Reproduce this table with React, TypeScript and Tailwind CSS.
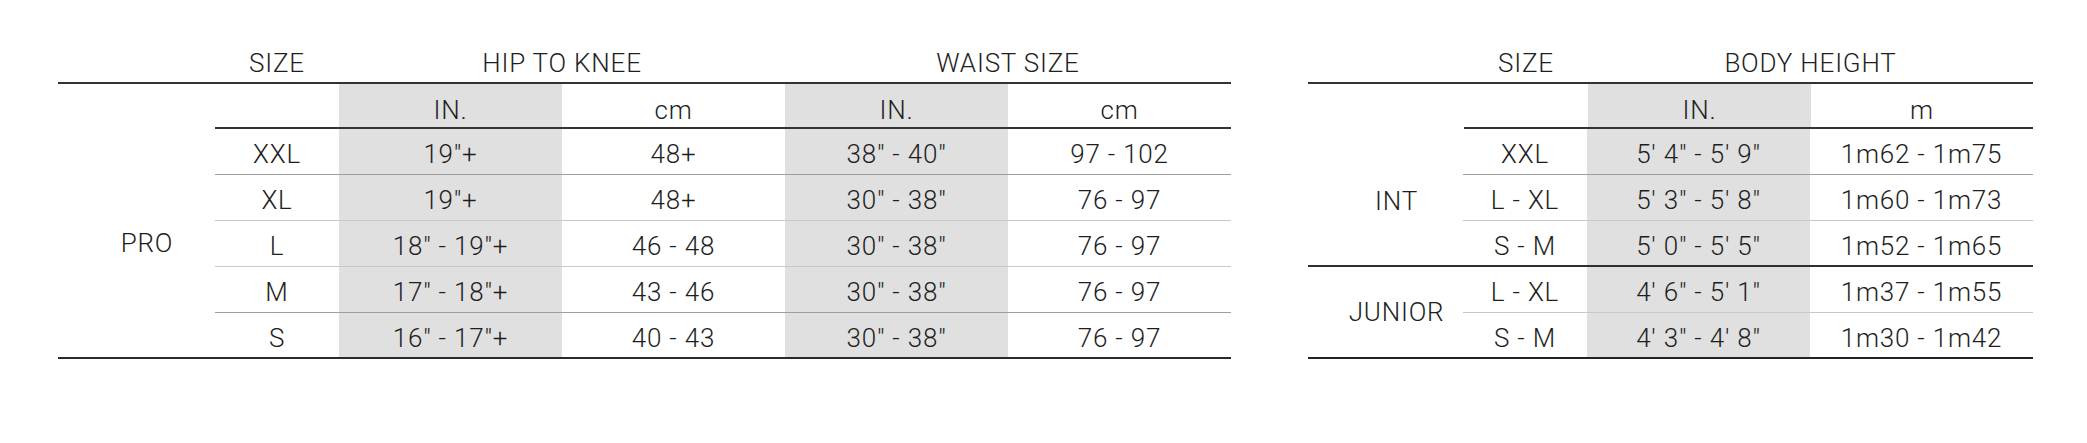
const font = { fontFamily: "Roboto, 'Liberation Sans', sans-serif" }

interface Row {
  size: string
  cells: string[]
  line: string
}

const proRows: Row[] = [
  { size: "XXL", cells: ["19″+", "48+", "38″ - 40″", "97 - 102"], line: "border-[#9e9e9e]" },
  { size: "XL", cells: ["19″+", "48+", "30″ - 38″", "76 - 97"], line: "border-[#c8c8c8]" },
  { size: "L", cells: ["18″ - 19″+", "46 - 48", "30″ - 38″", "76 - 97"], line: "border-[#c8c8c8]" },
  { size: "M", cells: ["17″ - 18″+", "43 - 46", "30″ - 38″", "76 - 97"], line: "border-[#9e9e9e]" },
  { size: "S", cells: ["16″ - 17″+", "40 - 43", "30″ - 38″", "76 - 97"], line: "" },
]

const intRows: Row[] = [
  { size: "XXL", cells: ["5′ 4″ - 5′ 9″", "1m62 - 1m75"], line: "border-[#9e9e9e]" },
  { size: "L - XL", cells: ["5′ 3″ - 5′ 8″", "1m60 - 1m73"], line: "border-[#c8c8c8]" },
  { size: "S - M", cells: ["5′ 0″ - 5′ 5″", "1m52 - 1m65"], line: "" },
]

const juniorRows: Row[] = [
  { size: "L - XL", cells: ["4′ 6″ - 5′ 1″", "1m37 - 1m55"], line: "border-[#c8c8c8]" },
  { size: "S - M", cells: ["4′ 3″ - 4′ 8″", "1m30 - 1m42"], line: "" },
]

function DataRow({ row, last }: { row: Row; last: boolean }) {
  return (
    <div className={`flex ${last ? "h-[44px]" : `h-[46px] border-b ${row.line}`}`}>
      <div className="w-[124px] flex items-center justify-center pt-[5px]">{row.size}</div>
      {row.cells.map((c, i) => (
        <div
          key={i}
          className={`w-[223px] flex items-center justify-center pt-[5px] ${i % 2 === 0 ? "bg-[#e0e0e0]" : ""}`}
        >
          {c}
        </div>
      ))}
    </div>
  )
}

function Group({ label, rows, last, pad }: { label: string; rows: Row[]; last?: boolean; pad: string }) {
  return (
    <div className={`flex ${last ? "border-b-2 border-[#222]" : "border-b-2 border-[#2f2f2f]"}`}>
      <div className={`w-[156px] flex items-center justify-center pl-[22px] ${pad}`}>{label}</div>
      <div className="flex flex-col">
        {rows.map((r, i) => (
          <DataRow key={i} row={r} last={i === rows.length - 1} />
        ))}
      </div>
    </div>
  )
}

export default function App() {
  return (
    <div
      className="w-[2087px] h-[443px] bg-white text-[26px] tracking-[0.8px] font-light text-[#1e1e1e] leading-none"
      style={font}
    >
      <div className="flex pl-[58px] pt-[36px] gap-[77px]">
        {/* left table */}
        <div className="w-[1173px] flex flex-col">
          <div className="flex h-[46px] items-end pb-[6px]">
            <div className="w-[157px]" />
            <div className="w-[124px] text-center">SIZE</div>
            <div className="w-[446px] text-center">HIP TO KNEE</div>
            <div className="w-[446px] text-center">WAIST SIZE</div>
          </div>
          <div className="border-t-2 border-[#333]">
            <div className="flex">
              <div className="w-[157px]" />
              <div className="flex h-[45px] border-b-2 border-[#333]">
                <div className="w-[124px]" />
                <div className="w-[223px] bg-[#e0e0e0] flex items-center justify-center pt-[8px]">IN.</div>
                <div className="w-[223px] flex items-center justify-center pt-[8px]">cm</div>
                <div className="w-[223px] bg-[#e0e0e0] flex items-center justify-center pt-[8px]">IN.</div>
                <div className="w-[223px] flex items-center justify-center pt-[8px]">cm</div>
              </div>
            </div>
            <div className="flex border-b-2 border-[#2a2a2a]">
              <div className="w-[157px] flex items-center justify-center pl-[21px]">PRO</div>
              <div className="flex flex-col">
                {proRows.map((r, i) => (
                  <DataRow key={i} row={r} last={i === proRows.length - 1} />
                ))}
              </div>
            </div>
          </div>
        </div>

        {/* right table */}
        <div className="w-[725px] flex flex-col">
          <div className="flex h-[46px] items-end pb-[6px]">
            <div className="w-[156px]" />
            <div className="w-[124px] text-center">SIZE</div>
            <div className="w-[445px] text-center">BODY HEIGHT</div>
          </div>
          <div className="border-t-2 border-[#333]">
            <div className="flex">
              <div className="w-[156px]" />
              <div className="flex h-[45px] border-b-2 border-[#333]">
                <div className="w-[124px]" />
                <div className="w-[223px] bg-[#e0e0e0] flex items-center justify-center pt-[8px]">IN.</div>
                <div className="w-[222px] flex items-center justify-center pt-[8px]">m</div>
              </div>
            </div>
            <Group label="INT" rows={intRows} pad="pt-[8px]" />
            <Group label="JUNIOR" rows={juniorRows} last pad="pt-0" />
          </div>
        </div>
      </div>
    </div>
  )
}
